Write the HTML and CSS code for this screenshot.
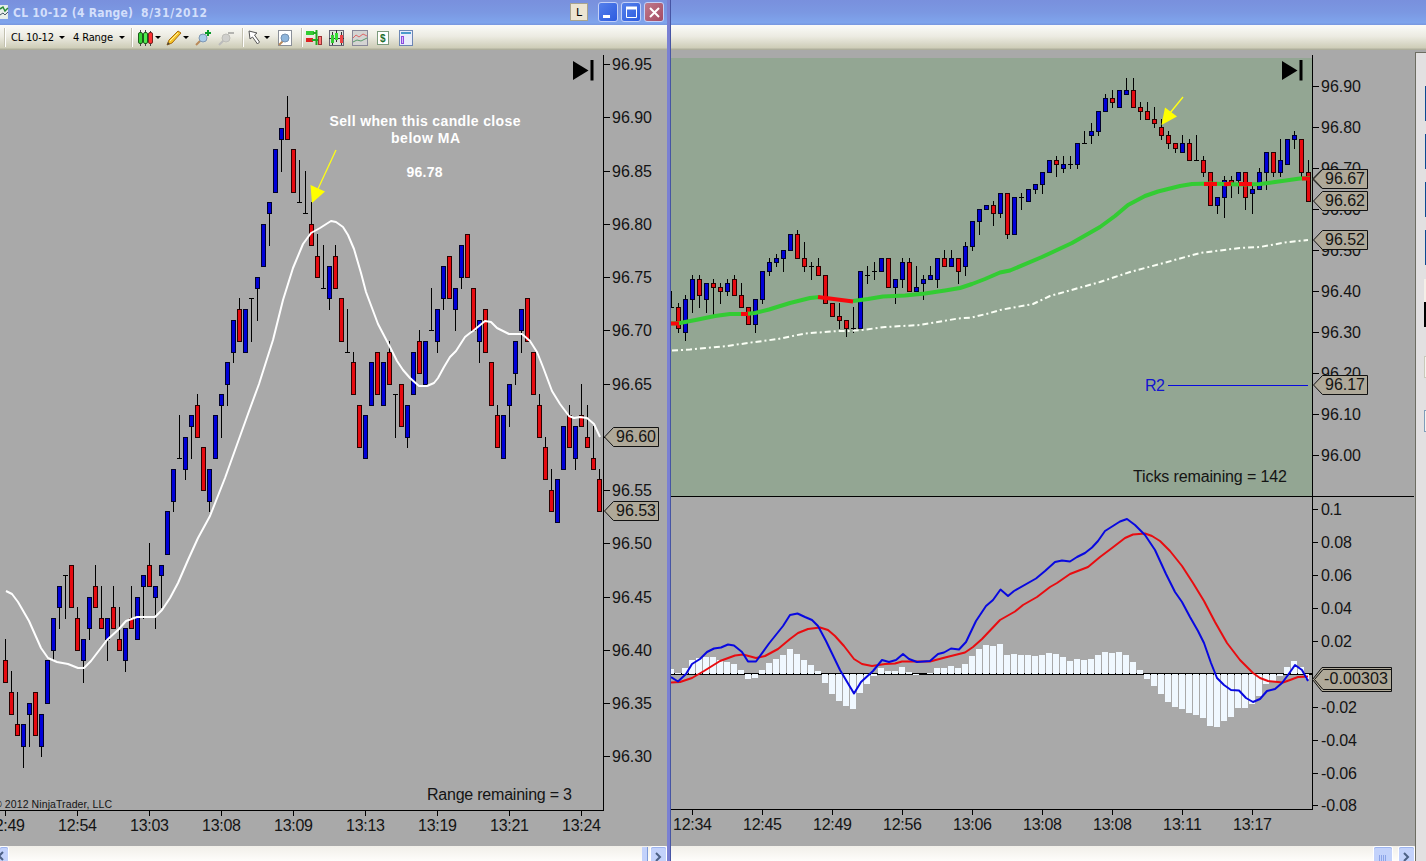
FILE: index.html
```html
<!DOCTYPE html>
<html lang="en">

<head>
    <meta charset="UTF-8">
    <title>CL 10-12 (4 Range) 8/31/2012</title>
    <link rel="stylesheet" href="styles.css">
</head>

<body>
    <!-- Range chart window -->
    <div class="window range-window">
        <div class="titlebar">
            <svg class="app-icon" width="9" height="16" viewBox="0 0 9 16">
                <rect width="8" height="14" y="1" fill="#e8f0ea" />
                <path d="M0 5l3-2 2 4 3-3" stroke="#2a8a3a" fill="none" stroke-width="1.5" />
                <path d="M0 11l3-2 2 2 3-3" stroke="#456" fill="none" />
            </svg>
            <svg class="title-text" width="200" height="24">
                <text x="0" y="17" textLength="120">CL 10-12 (4 Range)</text>
                <text x="128" y="17" textLength="66">8/31/2012</text>
            </svg>
            <div class="link-btn">L</div>
            <div class="win-btn"><svg width="19" height="19"><path d="M4 13.5h7" stroke="#fff" stroke-width="3" /></svg></div>
            <div class="win-btn"><svg width="19" height="19"><path d="M4 5h11M4.5 5v9.5h10V5" fill="none" stroke="#fff" /><path d="M4 5h11" stroke="#fff" stroke-width="3" /></svg></div>
            <div class="win-btn close"><svg width="19" height="19"><path d="M5 5l9 9M14 5l-9 9" stroke="#fff" stroke-width="2" /></svg></div>
        </div>
        <div class="toolbar">
            <i class="sep first"></i>
            <svg class="label" width="44" height="16"><text x="0" y="11" textLength="43">CL 10-12</text></svg>
            <i class="caret wide"></i>
            <svg class="label range" width="42" height="16"><text x="0" y="11" textLength="40">4 Range</text></svg>
            <i class="caret wide"></i>
            <i class="sep s2"></i>
            <!-- chart style -->
            <svg class="ic candles" width="15" height="16">
                <path d="M2.5 0v16M7.5 0v16M12.5 1v15" stroke="#444" />
                <rect x=".5" y="2.500" width="4" height="11" rx="1.500" fill="#35d435" stroke="#1c5a1c" />
                <rect x="5.500" y="2.500" width="4" height="11" rx="1.500" fill="#50ee50" stroke="#1c5a1c" />
                <rect x="10.500" y="2.500" width="4" height="11" rx="1.500" fill="#f33" stroke="#722" />
            </svg>
            <i class="caret"></i>
            <!-- drawing tools -->
            <svg class="ic pencil" width="16" height="16">
                <path d="M1 15l2-5 9-9 3 2-9 10z" fill="#f6c52a" stroke="#a86c10" />
                <path d="M4 11l8-8" stroke="#fff0a0" /><path d="M1 15l1-3 2 2z" fill="#444" />
            </svg>
            <i class="caret"></i>
            <svg class="ic zoom-in" width="17" height="16">
                <path d="M1 15l5-5" stroke="#b98a5a" stroke-width="2" />
                <circle cx="8" cy="8" r="4" fill="#a9cbea" stroke="#7d97b4" />
                <path d="M13 0v6M10 3h6" stroke="#0a9a2a" stroke-width="2" />
            </svg>
            <svg class="ic zoom-out" width="17" height="16">
                <path d="M1 15l5-5" stroke="#bbb" stroke-width="2" />
                <circle cx="8" cy="8" r="4" fill="#cfcfcc" stroke="#bdbdb8" />
                <path d="M10 3h6" stroke="#b4b4b0" stroke-width="2" />
            </svg>
            <i class="sep s3"></i>
            <svg class="ic pointer" width="13" height="15">
                <path d="M1 1l8 2-2.500 2 5 7-2 2-5-7-2.500 2z" fill="#fff" stroke="#555" />
            </svg>
            <i class="caret"></i>
            <svg class="ic data-box" width="15" height="16">
                <rect x=".5" y=".5" width="13" height="15" fill="#fff" stroke="#8a8f98" />
                <path d="M1 15l4-4" stroke="#b98a5a" stroke-width="2" />
                <circle cx="7" cy="8" r="4" fill="#8fb6dc" stroke="#7490b0" />
            </svg>
            <i class="sep s4"></i>
            <svg class="ic trader" width="16" height="16">
                <rect x="0" y="1" width="8" height="4" fill="#3c3" />
                <rect x="0" y="8" width="7" height="4" fill="#d22" />
                <path d="M7 3h4M6 10h6M10.500 0v15" stroke="#2a2" stroke-width="2" />
                <rect x="12.500" y="6.500" width="3" height="8" fill="#f77" stroke="#933" />
            </svg>
            <svg class="ic data-series" width="16" height="16">
                <rect x=".5" y=".5" width="14" height="15" fill="#dfe3dc" stroke="#667" />
                <path d="M0 8.500h15M3.500 2v13M7.500 0v12M12.500 2v13" stroke="#333" />
                <rect x="2" y="5" width="3" height="8" fill="#3c3" />
                <rect x="6" y="3" width="3" height="7" fill="#3d3" />
                <rect x="11" y="5" width="3" height="8" fill="#e44" />
            </svg>
            <svg class="ic indicators" width="16" height="16">
                <rect x=".5" y=".5" width="15" height="15" fill="#d4d4d2" stroke="#889" />
                <path d="M1 8l3-3 3 2 4-3 4 2" fill="none" stroke="#d66" />
                <path d="M1 12l4-2 4 1 6-3" fill="none" stroke="#5a9a6a" />
            </svg>
            <svg class="ic strategies" width="12" height="14">
                <rect x=".5" y=".5" width="11" height="13" fill="#fff" stroke="#7c9a7c" />
                <text x="3" y="11" class="dollar">$</text>
            </svg>
            <svg class="ic properties" width="14" height="16">
                <rect x=".5" y=".5" width="13" height="15" fill="#e8ecfb" stroke="#6c86b4" />
                <path d="M2 3h10" stroke="#4a9acb" stroke-width="2" />
                <rect x="2.500" y="6.500" width="2" height="7" fill="#d7bcf5" stroke="#8a4ae0" />
            </svg>
        </div>
        <svg id="range-chart" class="chart" width="667" height="796" viewBox="0 50 667 796"></svg>
        <div class="scrollbar">
            <div class="sb-btn sb-left"><svg width="8" height="15"><path d="M3 5l-4 4 4 4" fill="none" stroke="#4d6185" stroke-width="2" /></svg></div>
            <div class="sb-thumb-end"></div>
            <div class="sb-btn"><svg width="15" height="15"><path d="M5 6l4 4-4 4" fill="none" stroke="#4d6185" stroke-width="2" /></svg></div>
        </div>
    </div>

    <!-- Tick chart window -->
    <div class="window tick-window">
        <div class="titlebar"></div>
        <div class="toolbar"></div>
        <div class="tick-body">
            <div class="tick-main">
                <svg id="tick-chart" class="chart" width="744" height="796" viewBox="671 50 744 796"></svg>
                <div class="scrollbar">
                    <div class="sb-btn thumb"><svg width="18" height="15"><path d="M5.500 8v6M7.500 8v6M9.500 8v6M11.500 8v6" stroke="#8ca4e8" /></svg></div>
                    <div class="sb-btn"><svg width="15" height="15"><path d="M5 6l4 4-4 4" fill="none" stroke="#4d6185" stroke-width="2" /></svg></div>
                </div>
            </div>
            <!-- edge of the order panel -->
            <div class="side-panel">
                <i class="order"></i>
                <i class="order"></i>
                <i class="order"></i>
                <i class="order"></i>
                <i class="qty"></i>
                <i class="field"></i>
                <i class="field select"></i>
            </div>
        </div>
    </div>

    <script src="charts.js"></script>
</body>

</html>
```
FILE: styles.css
```css
body {
    margin: 0;
    width: 1426px;
    height: 861px;
    display: flex;
    overflow: hidden;
    background: #a9a9a9;
    font-family: "Liberation Sans", Arial, sans-serif;
}

.window {
    display: flex;
    flex-direction: column;
    height: 861px;
    box-sizing: border-box;
}

.range-window {
    width: 671px;
    border-right: 4px solid #7a80d2;
    position: relative;
}

/* dark outer edge of the window frame */
.range-window::after {
    content: "";
    position: absolute;
    right: -4px;
    top: 0;
    width: 1px;
    height: 861px;
    background: #4755a4;
}

.tick-window {
    width: 755px;
}

.titlebar {
    height: 25px;
    flex: none;
    display: flex;
    box-sizing: border-box;
    background: linear-gradient(#7990dd, #7b98e2 50%, #7fa4ec 90%, #7897df);
}

.app-icon {
    margin-top: 4px;
}

.title-text {
    margin-left: 4px;
    width: 200px;
    fill: #d3dffb;
    font: bold 12px "DejaVu Sans Condensed", "DejaVu Sans", sans-serif;
}

.link-btn {
    width: 16px;
    height: 16px;
    margin: 3px 10px 0 358px;
    background: #ece5d2;
    border: 1px solid #a8a48e;
    font: 11px/17px "DejaVu Sans", sans-serif;
    text-align: center;
}

.win-btn {
    width: 18px;
    height: 18px;
    margin: 2px 3px 0 0;
    border: 1px solid #c3d0f8;
    border-radius: 3px;
    background: linear-gradient(135deg, #5580ea, #2c5be0);
}

.win-btn svg {
    display: block;
}

.win-btn.close {
    background: linear-gradient(135deg, #c07a8c, #a44a62);
}

.toolbar {
    height: 25px;
    flex: none;
    display: flex;
    align-items: center;
    background: linear-gradient(#fbfbf8, #ecebe2 45%, #cfceb9 90%, #a6a694);
}

.toolbar > * {
    flex: none;
}

.label {
    font: 11px "DejaVu Sans Condensed", "DejaVu Sans", sans-serif;
}

.label.range {
    margin-left: 8px;
}

.sep {
    width: 1px;
    height: 19px;
    background: #c3c1b0;
    box-shadow: 1px 0 0 #fff;
}

.sep.first {
    margin: 0 6px 0 4px;
}

.sep.s2 {
    margin: 0 6px 0 6px;
}

.sep.s3 {
    margin: 0 5px 0 7px;
}

.sep.s4 {
    margin: 0 4px 0 8px;
}

.caret {
    border: 3px solid transparent;
    border-top-color: #000;
    border-bottom: 0;
    margin-left: 2px;
}

.caret.wide {
    margin-left: 4px;
}

.pencil {
    margin-left: 5px;
}

.pencil + .caret {
    margin-left: 1px;
}

.zoom-in,
.zoom-out {
    margin-left: 6px;
}

.pointer + .caret {
    margin-left: 3px;
}

.data-box {
    margin-left: 8px;
}

.data-series,
.indicators {
    margin-left: 7px;
}

.strategies {
    margin-left: 9px;
}

.properties {
    margin-left: 10px;
}

.dollar {
    font: bold 10px "Liberation Sans", sans-serif;
    fill: #1c6e2c;
}

.chart {
    display: block;
    flex: none;
    font-size: 16px;
}

.chart text {
    fill: #141414;
}

.scrollbar {
    height: 15px;
    display: flex;
    justify-content: flex-end;
    background: linear-gradient(#f1efe9, #fefdfb);
}

.sb-btn {
    width: 15px;
    height: 15px;
    margin: 1px 1px 0 3px;
    background: #c3d2fb;
    border-radius: 2px 2px 0 0;
    box-shadow: 0 0 0 1px #fff, inset 0 1px 0 #9db4ee;
}

.sb-left {
    width: 8px;
    margin: 1px auto 0 0;
}

.sb-thumb-end {
    width: 5px;
    margin-top: 1px;
    background: #c3d2fb;
    border-right: 1px solid #7f9bd8;
}

.thumb {
    width: 18px;
    margin-right: 4px;
}

.tick-body {
    display: flex;
}

.tick-main {
    width: 744px;
}

.side-panel {
    width: 11px;
    height: 809px;
    margin-top: 2px;
    border-left: 1px solid #6d6d62;
    border-top: 1px solid #6d6d62;
    background: #e2e0e1;
    display: flex;
    flex-direction: column;
    align-items: flex-end;
    padding-top: 33px;
    box-sizing: border-box;
}

.side-panel i {
    display: block;
    flex: none;
    width: 1px;
}

.order {
    height: 35px;
    margin-bottom: 13px;
    background: #0b4a92;
}

.side-panel .qty {
    width: 2px;
    height: 25px;
    margin-top: 1px;
    border-top: 23px solid #f4efe8;
    background: #000;
}

.side-panel .field {
    height: 20px;
    margin-top: 29px;
    background: #f4f4ee;
    border: 1px solid #c9c9ba;
    border-width: 1px 0 1px 1px;
}

.side-panel .select {
    margin-top: 32px;
    border-color: #7f9db9;
}

/* chart drawing */
.up {
    fill: #0000d8;
    stroke: #00002a;
}

.down {
    fill: #e60a10;
    stroke: #2a0000;
}

.wick,
.axis {
    stroke: #000;
    fill: none;
}

.crisp,
.wick,
.axis,
.up,
.down {
    shape-rendering: crispEdges;
}

.line {
    fill: none;
    stroke-linejoin: round;
}

.white {
    stroke: #fff;
    stroke-width: 2;
}

.vwap {
    stroke: #fafff5;
    stroke-width: 2;
    stroke-dasharray: 6 3 2 3;
}

.trend {
    stroke: #33cc33;
    stroke-width: 4;
}

.trend-off {
    stroke: #f8080c;
    stroke-width: 4;
}

.macd {
    stroke: #0808e0;
    stroke-width: 2;
}

.signal {
    stroke: #e80c10;
    stroke-width: 2;
}

.hist {
    fill: #f0f8ff;
}

.panel {
    fill: #93a693;
}

.tag {
    fill: #afa999;
    stroke: #111;
}

.arrow {
    fill: #ff0;
}

.arrow-line {
    stroke: #ffff14;
    stroke-width: 1.3;
}

.chart .note {
    font-weight: bold;
    font-size: 14px;
    fill: #fff;
}

.copyright {
    font-size: 10.5px;
}

.chart .pivot {
    fill: #1414d0;
}

.pivot-line {
    fill: #0808e0;
}
```
FILE: charts.js
```js
const NS = 'http://www.w3.org/2000/svg';

function add(svg, tag, attrs, text) {
    const el = document.createElementNS(NS, tag);
    for (const k in attrs) el.setAttribute(k, attrs[k]);
    if (text !== undefined) el.textContent = text;
    svg.appendChild(el);
    return el;
}

function line(svg, cls, pts) {
    add(svg, 'polyline', { class: 'line ' + cls, points: pts });
}

function label(svg, x, y, text, width, cls) {
    const a = { x: x, y: y, class: cls || '' };
    if (width) a.textLength = width;
    add(svg, 'text', a, text);
}

// each candle: direction, high, top of body, bottom of body, low (in ticks)
function candles(svg, data, x0, step, toY) {
    data.trim().split(/\s*;\s*/).forEach((row, i) => {
        const c = row.split(' ');
        const x = x0 + i * step + 0.5;
        const [h, t, b, l] = c.slice(1).map(v => Math.round(toY(+v)));
        add(svg, 'path', { class: 'wick', d: `M${x} ${h}V${l + 1}` });
        if (c[0] === 'd') {
            add(svg, 'path', { class: 'wick', d: `M${x - 2.5} ${t + 0.5}h5` });
        } else {
            add(svg, 'rect', { class: c[0] === 'u' ? 'up' : 'down', x: x - 2, y: t + 0.5, width: 4, height: b - t });
        }
    });
}

function tag(svg, x, y, right, text, width) {
    add(svg, 'path', { class: 'tag', d: `M${x} ${y}L${x + 9} ${y - 9.5}H${right}V${y + 9.5}H${x + 9}Z` });
    label(svg, x + 11.5, y + 5, text, width);
}

function skipIcon(svg, x) {
    add(svg, 'path', { d: `M${x} 61L${x + 15.5} 70.5L${x} 80Z` });
    add(svg, 'rect', { x: x + 17.5, y: 60, width: 3, height: 20.5 });
}

// ---- range chart ----
const rangeData = `
r 41 39 37 37;r 38 36 34 34;r 36 33 32 32;u 33 33 31 29;u 35 35 34 31;r 36 36 32 32;u 34 34 31 30;u 39 39 35 35;
u 43 43 40 39;u 46 46 44 42;d 47 47 47 43;r 48 48 44 44;r 44 43 40 40;u 41 41 39 37;u 45 45 42 41;r 48 46 44 44;
r 46 43 42 42;u 43 43 41 39;r 46 44 42 42;r 44 41 40 40;u 42 42 39 38;r 46 43 42 42;u 45 45 41 41;u 47 47 46 43;
r 50 48 46 46;u 46 46 45 42;u 48 48 47 44;u 53 53 49 49;u 57 57 54 53;d 62 58 58 58;u 60 60 57 56;u 62 62 61 58;
r 64 63 60 60;r 59 59 55 55;u 57 57 54 53;u 62 62 58 58;u 64 64 63 60;u 67 67 65 63;u 71 71 68 67;r 73 72 69 69;
u 72 72 68 68;d 73 73 73 69;u 75 75 74 71;u 80 80 76 76;u 82 82 81 78;u 87 87 83 83;u 89 89 88 85;r 92 90 88 88;
r 87 87 83 83;d 86 82 82 82;d 85 81 81 81;r 82 80 78 78;r 79 77 75 75;d 78 74 74 74;u 76 76 73 72;r 78 77 74 74;
r 73 73 69 69;d 72 68 68 68;r 68 67 64 64;r 63 63 59 59;u 62 62 58 58;u 67 67 63 63;r 68 68 64 64;u 67 67 63 63;
r 69 68 65 65;d 64 64 64 60;r 65 65 61 61;u 63 63 60 59;u 68 68 64 64;r 70 69 66 66;u 69 69 65 65;d 74 70 70 70;
u 72 72 69 68;u 76 76 73 72;r 77 77 73 73;u 74 74 72 70;u 78 78 75 74;r 79 79 75 75;r 74 74 70 70;u 71 71 69 67;
r 72 72 68 68;r 67 67 63 63;r 63 62 59 59;u 62 62 58 58;u 65 65 63 61;u 69 69 66 65;u 72 72 70 68;r 73 73 69 69;
r 68 68 64 64;r 64 63 60 60;r 60 59 56 56;r 57 55 53 53;u 56 56 52 52;u 61 61 57 57;r 63 62 59 59;u 61 61 58 57;
r 65 62 61 61;r 63 60 59 59;r 61 58 57 57;r 57 56 53 53`;

const range = document.getElementById('range-chart');
const rangeY = v => 64 + (95 - v) * 10.65;
candles(range, rangeData, 5, 6, rangeY);
line(range, 'white', '6,591 12,594 18,602 29,621 41,648 48,658 57,662 68,664 78,668 84,668 91,661 107,640 119,629 126,621 137,617 145,617 155,617 162,610 170,598 178,583 188,560 198,538 210,516 225,478 248,414 259,384 273,340 283,300 293,268 303,244 311,233 320,228 331,221 336,222 343,227 348,235 354,249 361,273 366,292 378,324 390,347 397,361 403,370 410,378 419,386 427,386 434,383 438,378 444,367 450,357 456,351 465,337 470,333 473,331 485,321 491,322 497,328 509,334 522,334 530,341 537,352 543,367 552,391 560,404 569,416 574,418 580,417 587,418 594,424 600,437');

add(range, 'path', { class: 'axis', d: 'M603.5 55V810.5H0' });
for (let v = 95; v >= 30; v -= 5) {
    const y = Math.round(rangeY(v));
    add(range, 'path', { class: 'axis', d: `M603 ${y + 0.5}h7` });
    if (v !== 60) label(range, 612, y + 6, '96.' + v, 40);
}
['12:49', '12:54', '13:03', '13:08', '13:09', '13:13', '13:19', '13:21', '13:24'].forEach((t, i) => {
    const x = 5 + 72 * i;
    add(range, 'path', { class: 'axis', d: `M${x + 0.5} 810v6` });
    label(range, x - 19, 831, t, 39);
});
tag(range, 604.5, 437, 658.5, '96.60', 40);
tag(range, 604.5, 511, 658.5, '96.53', 40);
label(range, 427, 800, 'Range remaining = 3', 145);
label(range, -6, 808, '© 2012 NinjaTrader, LLC', 118, 'copyright');
label(range, 329.5, 126, 'Sell when this candle close', 191, 'note');
label(range, 391, 143, 'below MA', 69, 'note');
label(range, 406.5, 177, '96.78', 36, 'note');
add(range, 'path', { class: 'arrow-line', d: 'M336 150L317 191' });
add(range, 'path', { class: 'arrow', d: 'M310.500 185L325 191.500L312 203Z' });
skipIcon(range, 573);

// ---- tick chart ----
const tickData = `
d 40 36 36 36;r 37 36 31 30;u 39 38 30 28;u 44 43 38 35;r 44 43 39 36;u 42 42 38 35;r 43 42 41 34;r 42 41 40 37;
u 43 42 40 39;r 44 43 39 39;r 42 39 36 36;r 36 36 32 32;u 38 38 32 30;u 45 45 38 37;u 48 47 45 44;u 49 48 47 46;
u 50 50 48 45;u 54 54 50 50;r 55 54 48 48;r 52 48 46 45;d 47 46 46 43;r 48 46 44 44;r 44 44 37 37;r 37 37 34 34;
r 37 34 33 31;r 33 33 31 29;d 36 31 31 30;u 45 45 31 31;d 46 44 44 42;d 47 45 45 43;u 48 48 45 45;r 48 48 41 41;
u 43 43 41 37;u 48 47 43 41;r 48 47 40 40;u 46 41 40 40;u 44 43 42 38;u 46 44 43 43;u 48 48 43 41;r 50 48 46 46;
u 50 48 46 46;r 48 48 45 42;u 52 51 46 44;u 57 57 51 50;u 60 60 57 54;u 61 61 60 60;r 62 61 59 56;u 64 64 59 58;
r 64 64 54 53;u 63 63 54 54;d 64 63 63 60;u 65 65 62 62;u 66 66 65 64;u 69 69 66 64;u 72 72 69 69;r 73 72 71 68;
u 73 71 70 69;d 73 71 71 70;u 76 76 71 70;d 79 76 76 76;u 81 79 78 76;u 84 84 79 78;u 88 87 84 84;r 89 87 86 85;
u 89 89 85 85;u 92 89 88 88;r 92 89 85 85;r 86 85 84 82;r 86 84 82 82;r 85 82 81 80;r 82 80 78 77;r 79 78 76 75;
r 76 76 75 74;u 78 76 74 74;r 77 76 72 72;d 78 72 72 72;r 73 72 69 68;r 69 69 61 61;u 63 63 61 59;u 68 67 63 58;
r 68 67 66 63;u 69 69 67 64;r 69 69 63 60;u 66 65 64 59;u 70 69 65 65;u 74 74 69 65;r 74 74 69 68;u 77 72 69 68;
u 77 77 71 71;u 79 78 77 75;r 77 77 69 68;r 72 69 62 62`;

const tick = document.getElementById('tick-chart');
const tickY = v => 86 + (90 - v) * 4.1;
add(tick, 'rect', { class: 'panel crisp', x: 671, y: 58, width: 641, height: 438 });
label(tick, 1145, 391, 'R2', 20, 'pivot');
add(tick, 'rect', { class: 'pivot-line crisp', x: 1168, y: 385, width: 140, height: 1 });
label(tick, 1133, 482, 'Ticks remaining = 142', 154);
candles(tick, tickData, 671, 7, tickY);
line(tick, 'vwap', '672,350.5 690,349.5 727,346 755,342 778,339 805,333.5 838,331 850,331 862,330 885,327 920,325 958,318.5 972,317.5 990,313 1000,310 1033,304 1050,296 1075,289 1100,282 1130,272 1160,264 1200,253 1240,248 1260,247 1285,242.5 1308,240');
line(tick, 'trend', '671,323.5 680,323 698,319.5 715,316 730,314 745,314 755,313 769,309.5 790,303 810,298 820,297');
line(tick, 'trend', '853,301 868,299 883,296.5 905,295.5 925,293.5 945,290.5 960,288 972,284 985,279 1000,272.5 1010,270.5 1042,257 1072,243 1100,227 1115,216 1128,205 1145,196 1158,191.5 1180,186 1192,184 1210,183.5 1240,184.5 1260,184 1275,182 1300,178.5 1310,178');
['671,323.5 679,323.5', '741,314 748,314', '818,297 853,301.5', '1204,184 1217,184', '1224,184.5 1231,183.5', '1239,184 1252,184', '1302,178.5 1310,178.5']
    .forEach(p => line(tick, 'trend-off', p));

// MACD histogram, bar heights in px
const hist = [5, 1, 6, 14, 16, 17, 17, 14, 12, 10, 4, -5, -4, 4, 11, 15, 19, 25, 20, 14, 9, 3, -9, -20, -27, -32, -35, -19, -10, -2,
    6, 3, 3, 7, 2, -1, 0, 1, 6, 6, 8, 6, 10, 18, 25, 29, 28, 30, 19, 20, 19, 19, 18, 19, 21, 20, 17, 13, 15, 14, 15, 19, 22, 21, 22,
    19, 12, 4, -5, -12, -20, -28, -33, -35, -39, -41, -44, -52, -53, -47, -43, -34, -34, -30, -22, -10, -7, -2, 7, 13, 7, -5];
add(tick, 'rect', { class: 'crisp', x: 671, y: 673, width: 641, height: 2 });
hist.forEach((h, i) => {
    if (!h) return;
    add(tick, 'rect', { class: 'hist crisp', x: 668 + 7 * i, y: h > 0 ? 674 - h : 674, width: i === 91 ? 4 : 6, height: Math.abs(h) });
});
line(tick, 'signal', '671,682.5 680,682 692,678 704,671 720,661 735,655.5 743,654.5 756,658 765,656 778,649 790,639 798,633 808,629 820,627.5 828,630 835,636 844,646 854,659 862,664 872,666 885,664 895,663.5 902,661.5 930,661.5 945,657.5 965,652.5 973,647 982,639 1000,620 1015,611.5 1023,605 1037,597 1050,587 1057,583 1070,574 1088,567 1100,557 1112,548 1125,538 1133,534.5 1145,533.5 1152,536 1160,541 1170,551 1182,566 1193,583 1204,601 1215,622 1227,643 1240,660 1253,673 1260,678 1268,681 1283,682.5 1290,680 1298,677 1308,676.5');
line(tick, 'macd', '671,677 678,681.5 686,674 692,664 700,659 707,652 714,648.5 721,647.5 728,644.5 734,645.5 742,652 748,661.5 756,661.5 769,643.5 783,626 790,615 797.5,613.5 805,617 812,620 818,626 826,641 840,670 854,693.5 861,682 873,671 882,660 889,662 896,660 903,654 909,659 917,662 930,661 938,654 944,652.5 951,648.5 959,649.5 966,642 976,621 986,606 993,600 1000.5,589.5 1008,596 1014,591 1036,578.5 1045,571 1055,562 1062,560.5 1070,561.5 1077,557 1085,553 1092,547.5 1098,541 1105,531 1120,521.5 1127,519 1135,525 1145,535 1155,550 1166,574 1175,592 1182,602 1190,617 1198,631 1204,643 1211,663 1217,678 1224,685 1231,690 1239,690.5 1246,698 1253,702 1260,699 1267,691 1275,689 1282,683 1288,675 1295,665 1302,670 1308,681');

add(tick, 'path', { class: 'axis', d: 'M1312.500 55V809.500H671M671 496.500H1414' });
for (let v = 90; v >= 0; v -= 10) {
    const y = Math.round(tickY(v));
    add(tick, 'path', { class: 'axis', d: `M1312 ${y + 0.5}h7` });
    label(tick, 1321, y + 6, '96.' + (v || '00'), 40);
}
[['0.1', 509, 21], ['0.08', 542, 31], ['0.06', 575, 31], ['0.04', 608, 31], ['0.02', 641, 31],
    ['-0.02', 707, 36], ['-0.04', 740, 36], ['-0.06', 773, 36], ['-0.08', 805, 36]].forEach(([t, y, w]) => {
    add(tick, 'path', { class: 'axis', d: `M1312 ${y + 0.5}h6` });
    label(tick, 1321, y + 6, t, w);
});
['12:34', '12:45', '12:49', '12:56', '13:06', '13:08', '13:08', '13:11', '13:17'].forEach((t, i) => {
    const x = 692 + 70 * i;
    add(tick, 'path', { class: 'axis', d: `M${x + 0.5} 809v6` });
    label(tick, x - 19, 830, t, 39);
});
add(tick, 'path', { class: 'tag', d: 'M1312.500 179L1322 169.500H1367.500V188.500H1322Z' });
tag(tick, 1313.5, 179, 1367.5, '96.67', 40);
tag(tick, 1313.5, 201, 1367.5, '96.62', 40);
tag(tick, 1313.5, 240, 1367.5, '96.52', 40);
tag(tick, 1313.5, 385, 1367.5, '96.17', 40);
add(tick, 'path', { class: 'tag', d: 'M1312.500 679.500L1322 667.500H1391.500V691.500H1322Z' });
add(tick, 'path', { class: 'tag', d: 'M1314.500 679.500L1323 669.500H1391.500V689.500H1323Z' });
label(tick, 1324, 684, '-0.00303', 64);
add(tick, 'path', { class: 'arrow-line', d: 'M1183 97L1170 113' });
add(tick, 'path', { class: 'arrow', d: 'M1165 107.500L1177 116.500L1161.500 125Z' });
skipIcon(tick, 1282);
```
